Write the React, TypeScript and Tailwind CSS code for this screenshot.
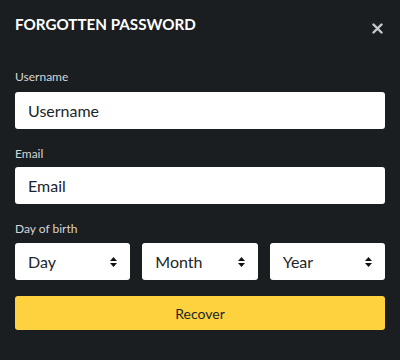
import React from "react";

function Arrows() {
  return (
    <svg width="7" height="10" viewBox="0 0 7 10" className="shrink-0">
      <path d="M3.5 0 L7 4 L0 4 Z" fill="#111" />
      <path d="M0 6 L7 6 L3.5 10 Z" fill="#111" />
    </svg>
  );
}

function Select({ label }: { label: string }) {
  return (
    <div className="flex-1 h-[37px] bg-white rounded-[3px] flex items-center justify-between pl-[13px] pr-[13px]">
      <span className="text-[16px] text-[#212529]">{label}</span>
      <Arrows />
    </div>
  );
}

export default function App() {
  return (
    <div
      className="w-[400px] h-[360px] bg-[#1b1e21] px-[15px] pt-[13px]"
      style={{ fontFamily: 'Lato, "Open Sans", sans-serif' }}
    >
      <div className="flex items-start justify-between">
        <h1 className="text-[15.2px] leading-[22px] font-bold text-white">FORGOTTEN PASSWORD</h1>
        <svg width="11" height="11" viewBox="0 0 11 11" className="mr-[2px] mt-[10px]">
          <path d="M1.5 1.5 L9.5 9.5 M9.5 1.5 L1.5 9.5" stroke="#c8c9ca" strokeWidth="2.4" strokeLinecap="round" />
        </svg>
      </div>
      <div className="mt-[34px] flex flex-col">
        <label className="text-[12px] text-[#d4d5d6] leading-[16px]">Username</label>
        <div className="mt-[7px] h-[37px] bg-white rounded-[3px] flex items-center pl-[13px]">
          <span className="text-[16px] text-[#212529]">Username</span>
        </div>
        <label className="mt-[17px] text-[12px] text-[#d4d5d6] leading-[16px]">Email</label>
        <div className="mt-[5px] h-[37px] bg-white rounded-[3px] flex items-center pl-[13px]">
          <span className="text-[16px] text-[#212529]">Email</span>
        </div>
        <label className="mt-[17px] text-[12px] text-[#d4d5d6] leading-[16px]">Day of birth</label>
        <div className="mt-[6px] flex gap-[12px]">
          <Select label="Day" />
          <Select label="Month" />
          <Select label="Year" />
        </div>
        <button className="mt-[16px] h-[34px] bg-[#fdd23e] rounded-[3px] text-[14px] text-[#212529]">
          Recover
        </button>
      </div>
    </div>
  );
}
